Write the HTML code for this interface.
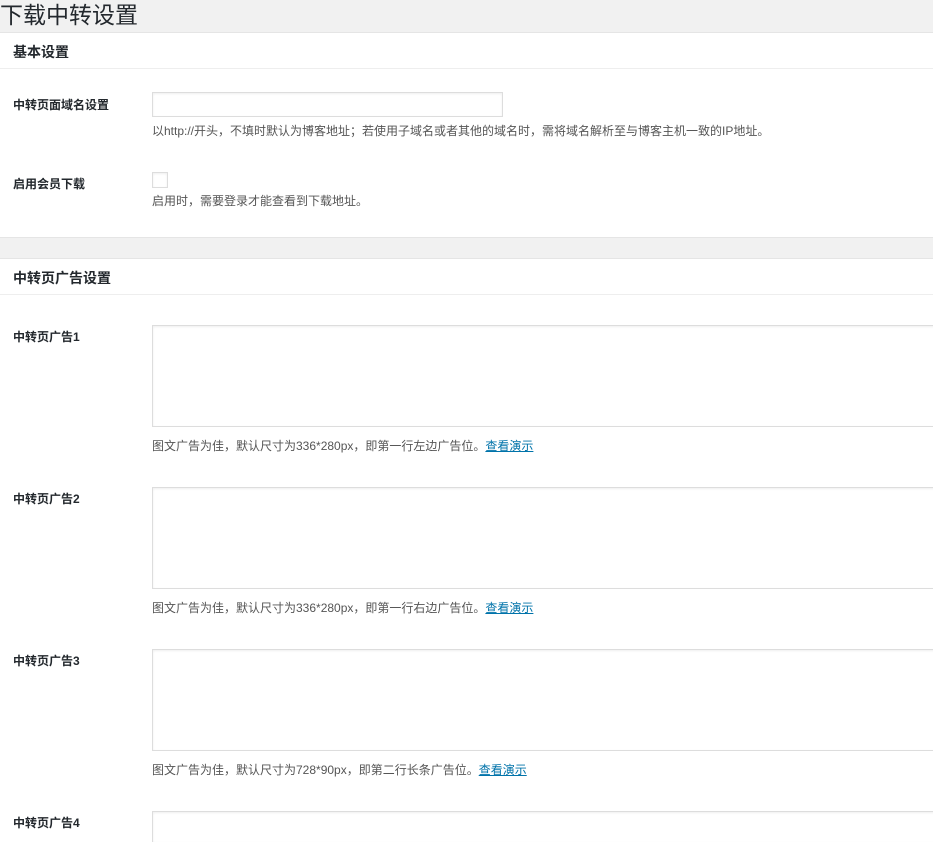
<!DOCTYPE html>
<html style="height:842px;overflow:hidden"><head><meta charset="utf-8"><style>
*{box-sizing:border-box;margin:0;padding:0}
body{width:933px;height:842px;overflow:hidden;background:#f1f1f1;font-family:"Liberation Sans","Noto Sans CJK SC",sans-serif;color:#23282d;position:relative}
.a{position:absolute;white-space:nowrap}
h1{position:absolute;left:0;top:1px;font-size:23px;font-weight:400;line-height:28px}
.panel{position:absolute;left:0;width:933px;background:#fff;border-top:1px solid #e5e5e5;border-bottom:1px solid #e5e5e5}
.hd{font-size:14px;font-weight:700;left:13px}
.line{position:absolute;left:0;width:933px;height:1px;background:#eee}
.lbl{font-size:12px;font-weight:700;left:13px;color:#23282d}
.desc{font-size:12px;color:#555;left:152px}
.desc a{color:#0073aa;text-decoration:underline}
.inp{position:absolute;border:1px solid #ddd;background:#fff;box-shadow:inset 0 1px 2px rgba(0,0,0,.07)}
</style></head><body>
<h1>下载中转设置</h1>
<div class="panel" style="top:32px;height:206px"></div>
<div class="a hd" style="top:42px">基本设置</div>
<div class="line" style="top:68px"></div>
<div class="a lbl" style="top:96px">中转页面域名设置</div>
<div class="inp" style="left:152px;top:92px;width:351px;height:25px"></div>
<div class="a desc" style="top:122px">以http://开头，不填时默认为博客地址；若使用子域名或者其他的域名时，需将域名解析至与博客主机一致的IP地址。</div>
<div class="a lbl" style="top:175px">启用会员下载</div>
<div class="inp" style="left:152px;top:172px;width:16px;height:16px"></div>
<div class="a desc" style="top:192px">启用时，需要登录才能查看到下载地址。</div>
<div class="panel" style="top:258px;height:584px;border-bottom:none"></div>
<div class="a hd" style="top:268px">中转页广告设置</div>
<div class="line" style="top:294px"></div>
<div class="a lbl" style="top:328px">中转页广告1</div>
<div class="inp" style="left:152px;top:325px;width:790px;height:102px"></div>
<div class="a desc" style="top:437px">图文广告为佳，默认尺寸为336*280px，即第一行左边广告位。<a>查看演示</a></div>
<div class="a lbl" style="top:490px">中转页广告2</div>
<div class="inp" style="left:152px;top:487px;width:790px;height:102px"></div>
<div class="a desc" style="top:599px">图文广告为佳，默认尺寸为336*280px，即第一行右边广告位。<a>查看演示</a></div>
<div class="a lbl" style="top:652px">中转页广告3</div>
<div class="inp" style="left:152px;top:649px;width:790px;height:102px"></div>
<div class="a desc" style="top:761px">图文广告为佳，默认尺寸为728*90px，即第二行长条广告位。<a>查看演示</a></div>
<div class="a lbl" style="top:814px">中转页广告4</div>
<div class="inp" style="left:152px;top:811px;width:790px;height:31px;border-bottom:none"></div>
</body></html>
